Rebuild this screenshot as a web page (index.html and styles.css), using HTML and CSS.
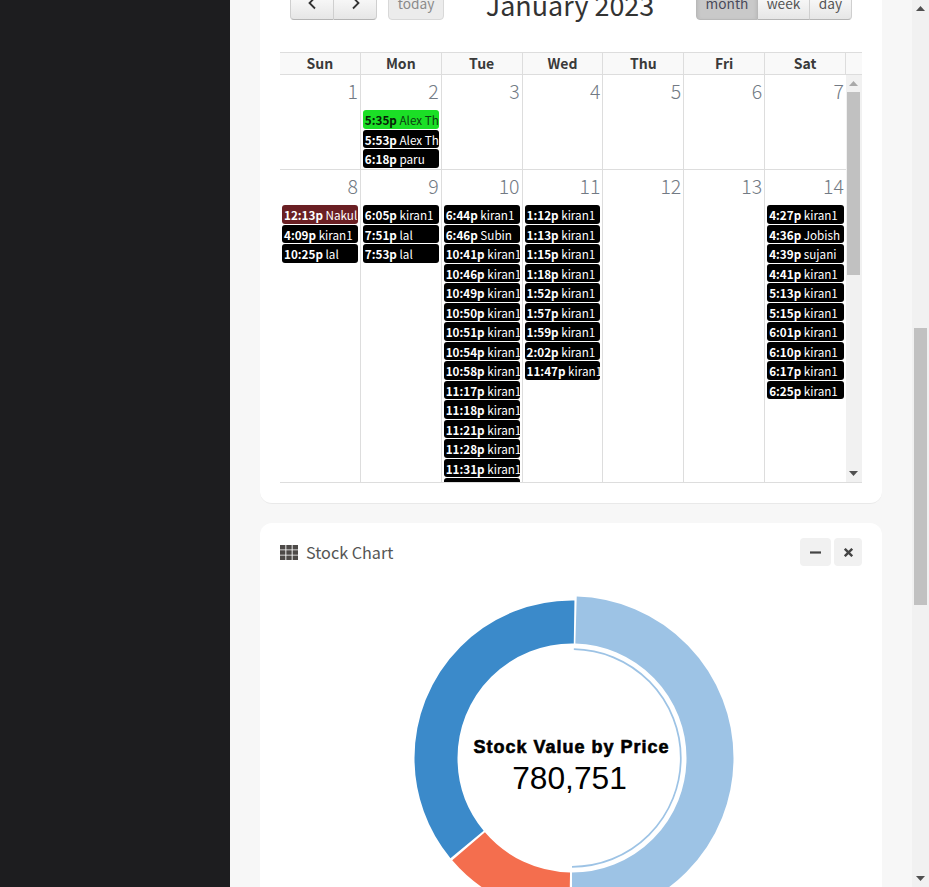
FILE: index.html
```html
<!DOCTYPE html>
<html lang="en">
<head>
<meta charset="utf-8">
<title>Dashboard</title>
<link rel="stylesheet" href="styles.css">
</head>
<body>
<div class="page">
  <aside class="sidebar"></aside>
  <main class="main">
    <section class="card calendar-card">
      <div class="toolbar">
        <div class="tool-left">
          <div class="btn-group">
            <button class="btn btn-prev"><svg width="11" height="14" viewBox="0 0 11 14"><path d="M8 1.500 2.500 7 8 12.500" fill="none" stroke="#333" stroke-width="1.800"/></svg></button>
            <button class="btn btn-next"><svg width="11" height="14" viewBox="0 0 11 14"><path d="M3 1.500 8.500 7 3 12.500" fill="none" stroke="#333" stroke-width="1.800"/></svg></button>
          </div>
          <button class="btn btn-today">today</button>
        </div>
        <h2 class="cal-title">January 2023</h2>
        <div class="btn-group">
          <button class="btn btn-month">month</button>
          <button class="btn btn-week">week</button>
          <button class="btn btn-day">day</button>
        </div>
      </div>
      <div class="cal-head">
        <div class="head-cell">Sun</div><div class="head-cell">Mon</div><div class="head-cell">Tue</div><div class="head-cell">Wed</div><div class="head-cell">Thu</div><div class="head-cell">Fri</div><div class="head-cell">Sat</div><div class="head-spacer"></div>
      </div>
      <div class="cal-body">
        <div class="weeks">
          <div class="week">
            <div class="day"><div class="num">1</div></div>
            <div class="day"><div class="num">2</div>
              <div class="ev ev-green"><b>5:35p</b> Alex Thomas</div>
              <div class="ev"><b>5:53p</b> Alex Thomas</div>
              <div class="ev"><b>6:18p</b> paru</div>
            </div>
            <div class="day"><div class="num">3</div></div>
            <div class="day"><div class="num">4</div></div>
            <div class="day"><div class="num">5</div></div>
            <div class="day"><div class="num">6</div></div>
            <div class="day"><div class="num">7</div></div>
          </div>
          <div class="week">
            <div class="day"><div class="num">8</div>
              <div class="ev ev-maroon"><b>12:13p</b> Nakul</div>
              <div class="ev"><b>4:09p</b> kiran1</div>
              <div class="ev"><b>10:25p</b> lal</div>
            </div>
            <div class="day"><div class="num">9</div>
              <div class="ev"><b>6:05p</b> kiran1</div>
              <div class="ev"><b>7:51p</b> lal</div>
              <div class="ev"><b>7:53p</b> lal</div>
            </div>
            <div class="day"><div class="num">10</div>
              <div class="ev"><b>6:44p</b> kiran1</div>
              <div class="ev"><b>6:46p</b> Subin</div>
              <div class="ev"><b>10:41p</b> kiran1</div>
              <div class="ev"><b>10:46p</b> kiran1</div>
              <div class="ev"><b>10:49p</b> kiran1</div>
              <div class="ev"><b>10:50p</b> kiran1</div>
              <div class="ev"><b>10:51p</b> kiran1</div>
              <div class="ev"><b>10:54p</b> kiran1</div>
              <div class="ev"><b>10:58p</b> kiran1</div>
              <div class="ev"><b>11:17p</b> kiran1</div>
              <div class="ev"><b>11:18p</b> kiran1</div>
              <div class="ev"><b>11:21p</b> kiran1</div>
              <div class="ev"><b>11:28p</b> kiran1</div>
              <div class="ev"><b>11:31p</b> kiran1</div>
              <div class="ev"><b>11:33p</b> kiran1</div>
            </div>
            <div class="day"><div class="num">11</div>
              <div class="ev"><b>1:12p</b> kiran1</div>
              <div class="ev"><b>1:13p</b> kiran1</div>
              <div class="ev"><b>1:15p</b> kiran1</div>
              <div class="ev"><b>1:18p</b> kiran1</div>
              <div class="ev"><b>1:52p</b> kiran1</div>
              <div class="ev"><b>1:57p</b> kiran1</div>
              <div class="ev"><b>1:59p</b> kiran1</div>
              <div class="ev"><b>2:02p</b> kiran1</div>
              <div class="ev"><b>11:47p</b> kiran1</div>
            </div>
            <div class="day"><div class="num">12</div></div>
            <div class="day"><div class="num">13</div></div>
            <div class="day"><div class="num">14</div>
              <div class="ev"><b>4:27p</b> kiran1</div>
              <div class="ev"><b>4:36p</b> Jobish</div>
              <div class="ev"><b>4:39p</b> sujani</div>
              <div class="ev"><b>4:41p</b> kiran1</div>
              <div class="ev"><b>5:13p</b> kiran1</div>
              <div class="ev"><b>5:15p</b> kiran1</div>
              <div class="ev"><b>6:01p</b> kiran1</div>
              <div class="ev"><b>6:10p</b> kiran1</div>
              <div class="ev"><b>6:17p</b> kiran1</div>
              <div class="ev"><b>6:25p</b> kiran1</div>
            </div>
          </div>
        </div>
        <div class="scrollbar inner-bar">
          <svg class="arrow" width="9" height="5" viewBox="0 0 9 5"><path d="M4.500 0 9 5H0z" fill="#a9a9a9"/></svg>
          <div class="thumb inner-thumb"></div>
          <div class="fill"></div>
          <svg class="arrow" width="9" height="5" viewBox="0 0 9 5"><path d="M0 0h9L4.500 5z" fill="#505050"/></svg>
        </div>
      </div>
    </section>
    <section class="card chart-card">
      <div class="chart-head">
        <div class="chart-title">
          <svg class="grid-icon" width="18" height="15" viewBox="0 0 18 15"><path d="M0 0h5.400v4.400H0zM6.300 0h5.400v4.400H6.300zM12.600 0H18v4.400h-5.400zM0 5.300h5.400v4.400H0zM6.300 5.300h5.400v4.400H6.300zM12.600 5.300H18v4.400h-5.400zM0 10.600h5.400V15H0zM6.300 10.600h5.400V15H6.300zM12.600 10.600H18V15h-5.400z" fill="#4d4a48"/></svg>
          <span>Stock Chart</span>
        </div>
        <div class="chart-tools">
          <button class="tool tool-min"><svg width="11" height="11" viewBox="0 0 11 11"><path d="M0 5.500h11" stroke="#444" stroke-width="2.200"/></svg></button>
          <button class="tool tool-close"><svg width="9" height="9" viewBox="0 0 9 9"><path d="M.8.800l7.400 7.400M8.200.800 .8 8.200" stroke="#444" stroke-width="2.400"/></svg></button>
        </div>
      </div>
      <div class="donut">
        <svg class="donut-svg" width="330" height="330" viewBox="0 0 330 330">
          <g transform="rotate(-90 165 165)" fill="none">
            <circle cx="165" cy="165" r="138" stroke="#9dc3e5" stroke-width="47" pathLength="360" stroke-dasharray="178.300 181.700" stroke-dashoffset="-1.700"/>
            <circle cx="165" cy="165" r="136" stroke="#f46e4e" stroke-width="43" pathLength="360" stroke-dasharray="48.500 311.500" stroke-dashoffset="-181"/>
            <circle cx="165" cy="165" r="136" stroke="#3b8aca" stroke-width="43" pathLength="360" stroke-dasharray="130.400 229.600" stroke-dashoffset="-230.500"/>
            <circle cx="165" cy="165" r="108.800" stroke="#9dc3e5" stroke-width="1.700" pathLength="360" stroke-dasharray="179 181" stroke-dashoffset="-1"/>
          </g>
        </svg>
        <div class="donut-label">
          <div class="donut-name">Stock Value by Price</div>
          <div class="donut-value">780,751</div>
        </div>
      </div>
    </section>
  </main>
  <div class="scrollbar page-bar">
    <svg class="arrow" width="9" height="5" viewBox="0 0 9 5"><path d="M4.500 0 9 5H0z" fill="#505050"/></svg>
    <div class="fill page-before"></div>
    <div class="thumb page-thumb"></div>
    <div class="fill"></div>
    <svg class="arrow" width="9" height="5" viewBox="0 0 9 5"><path d="M0 0h9L4.500 5z" fill="#505050"/></svg>
  </div>
</div>
</body>
</html>
```
FILE: styles.css
```css
* { box-sizing: border-box; }
html, body { margin: 0; padding: 0; height: 100%; overflow: hidden; }
body { font-family: "Noto Sans CJK SC", "Noto Sans", sans-serif; color: #333; background: #f7f7f7; }
.page { display: flex; height: 887px; overflow: hidden; }
.sidebar { width: 230px; flex: none; background: #1d1d1f; }
.main { flex: 1; min-width: 0; padding: 0 30px; display: flex; flex-direction: column; gap: 19px; }
.card { background: #fff; border-radius: 12px; flex: none; }
.calendar-card { margin-top: -30px; padding: 19px 20px 20px; border-bottom: 1px solid #e9e9e9; }

.toolbar { display: flex; justify-content: space-between; align-items: center; height: 31px; padding: 0 10px; margin-bottom: 32px; }
.tool-left { display: flex; gap: 11px; width: 154px; }
.btn-group { display: flex; }
.btn { font: 13.700px/1 "Noto Sans CJK SC", sans-serif; height: 31px; padding: 0 0 1px; color: #333; border: 1px solid #cfcfcf; border-bottom-color: #b5b5b5; background: linear-gradient(#fff, #e6e6e6); display: flex; align-items: center; justify-content: center; }
.btn-group .btn + .btn { border-left: 0; }
.btn-group .btn:first-child { border-radius: 4px 0 0 4px; }
.btn-group .btn:last-child { border-radius: 0 4px 4px 0; }
.btn-prev { width: 44px; padding-bottom: 3px; }
.btn-next { width: 43px; padding-bottom: 3px; }
.btn-today { width: 56px; border-radius: 4px; color: #8a8a8a; background: #ececec; border-color: #d8d8d8; }
.btn-month { width: 62px; background: #c9c9c9; color: #4a4a5a; border-color: #b9b9b9; box-shadow: inset 0 2px 4px rgba(0,0,0,.12); }
.btn-week { width: 52px; color: #555; }
.btn-day { width: 42px; color: #555; }
.cal-title { margin: 0; font-size: 26.900px; font-weight: 400; line-height: 31px; color: #333; white-space: nowrap; }

.cal-head { display: grid; grid-template-columns: repeat(7, 1fr) 16px; height: 23px; border-top: 1px solid #ddd; border-bottom: 1px solid #ddd; background: #f9f9f9; }
.head-cell { text-align: center; font-size: 14px; font-weight: 700; line-height: 20px; color: #3a3a3a; border-right: 1px solid #ddd; }
.cal-body { display: flex; height: 408px; border-bottom: 1px solid #ddd; overflow: hidden; }
.weeks { flex: 1; min-width: 0; }
.week { display: grid; grid-template-columns: repeat(7, 1fr); border-bottom: 1px solid #ddd; min-height: 95px; }
.day { min-width: 0; border-right: 1px solid #ddd; }
.day:last-child { border-right: 0; }
.num { height: 35px; text-align: right; padding: 2px 2px 0 0; font-size: 19.500px; line-height: 27px; font-weight: 300; color: #727a84; }
.ev { height: 18.500px; margin: 0 2px 1px; padding: 0 2px; border-radius: 3px; background: #000; color: #fff; font-size: 11.700px; line-height: 19px; white-space: nowrap; overflow: hidden; }
.ev b { font-weight: 700; }
.ev-green { background: #1bdf26; color: #0d3d10; }
.ev-green b { color: #062006; }
.ev-maroon { background: #6a1f23; }

.scrollbar { flex: none; display: flex; flex-direction: column; align-items: center; background: #f1f1f1; }
.inner-bar { width: 16px; padding: 6px 1px 6px 0; }
.inner-thumb { width: 13px; height: 183px; margin-top: 6px; background: #c1c1c1; }
.fill { flex: 1; }
.arrow { flex: none; display: block; }
.page-bar { width: 17px; padding: 6px 0 6px; }
.page-before { flex: none; height: 317px; }
.page-thumb { width: 13px; height: 277px; background: #c1c1c1; }

.chart-card { padding: 15px 20px 0; height: 500px; }
.chart-head { display: flex; justify-content: space-between; align-items: center; height: 28px; }
.chart-title { display: flex; align-items: center; gap: 8px; font-size: 16.200px; color: #555; }
.grid-icon { display: block; }
.chart-tools { display: flex; gap: 3px; }
.tool { width: 31px; height: 28px; border: 0; padding: 0; border-radius: 4px; background: #f1f1f1; display: flex; align-items: center; justify-content: center; }
.tool-close { width: 28px; }
.donut { display: grid; place-items: center; width: 330px; height: 330px; margin: 26.500px 0 0 126.500px; }
.donut-svg, .donut-label { grid-area: 1 / 1; }
.donut-svg { display: block; }
.donut-label { text-align: center; font-family: "Liberation Sans", Arial, sans-serif; color: #000; position: relative; top: 9.500px; }
.donut-name { font-size: 18px; font-weight: 700; letter-spacing: 1px; line-height: 20px; white-space: nowrap; -webkit-text-stroke: .6px #000; }
.donut-value { font-size: 31.700px; line-height: 38px; margin-top: 2px; padding-right: 4px; }
```
